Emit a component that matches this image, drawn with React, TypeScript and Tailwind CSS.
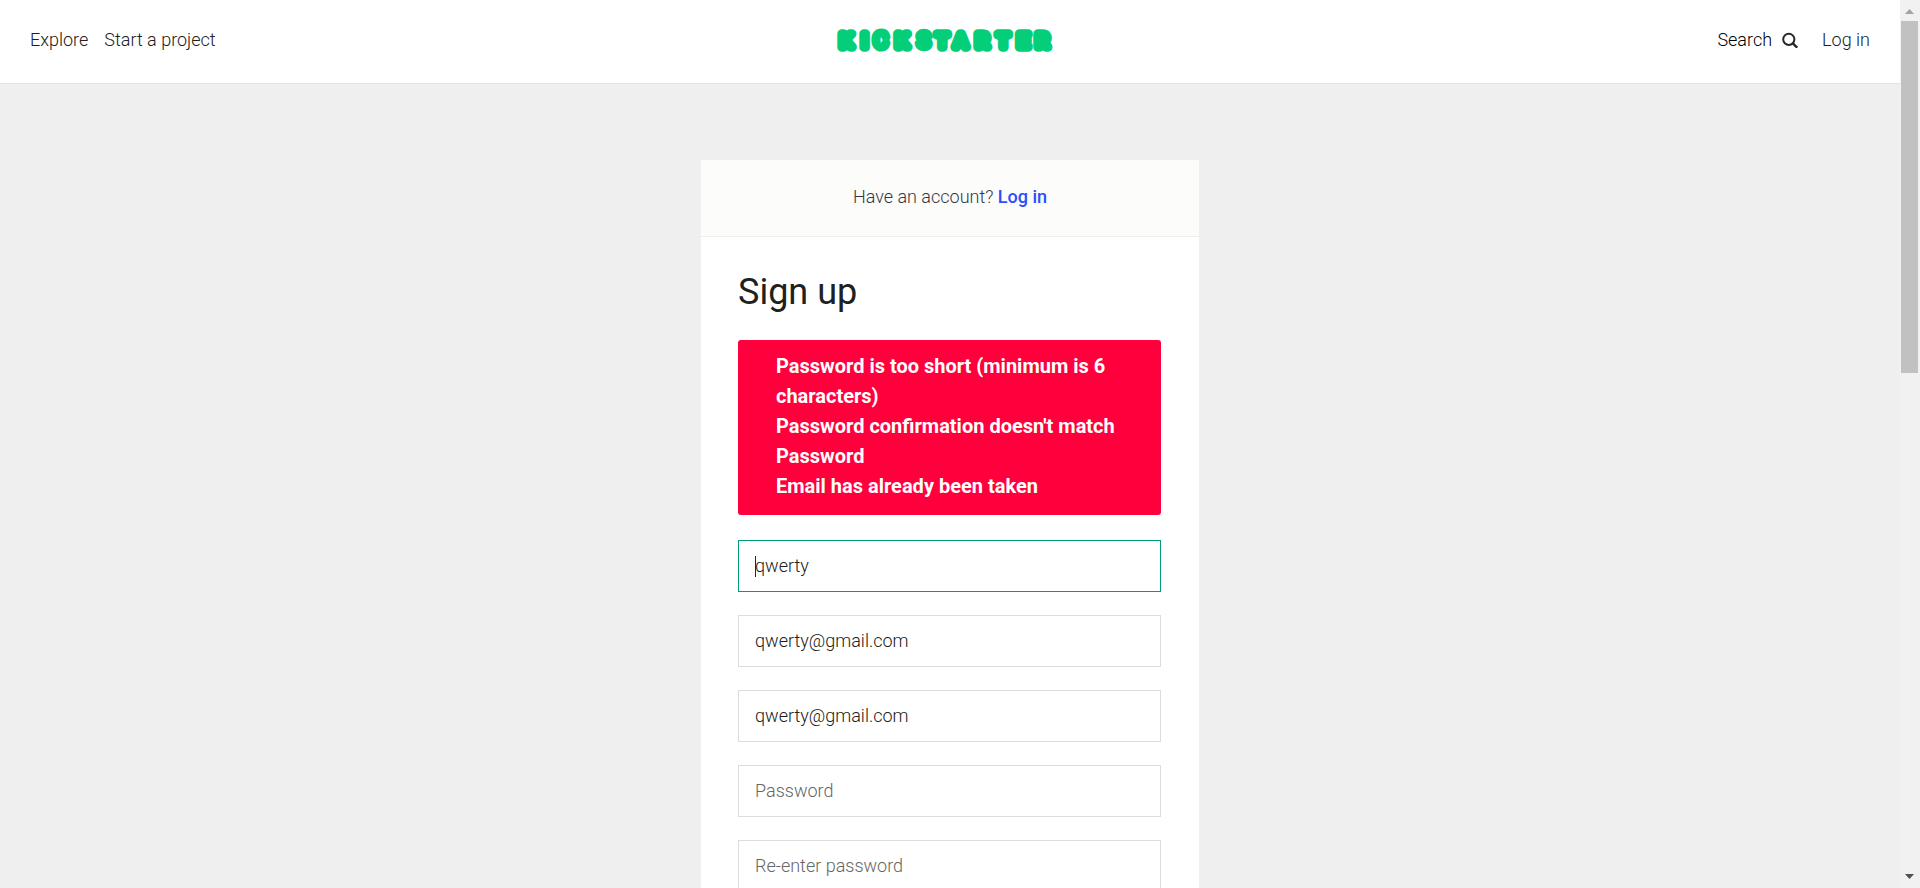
import React from 'react';

type Field = {
  id: string;
  label: string;
  type: string;
  value?: string;
  active?: boolean;
};

const fields: Field[] = [
  { id: 'name', label: 'Name', type: 'text', value: 'qwerty', active: true },
  { id: 'email', label: 'Email', type: 'email', value: 'qwerty@gmail.com' },
  { id: 'email-confirm', label: 'Re-enter email', type: 'email', value: 'qwerty@gmail.com' },
  { id: 'password', label: 'Password', type: 'password' },
  { id: 'password-confirm', label: 'Re-enter password', type: 'password' },
];

const errors = [
  'Password is too short (minimum is 6 characters)',
  "Password confirmation doesn't match Password",
  'Email has already been taken',
];

function Logo() {
  return (
    <svg width="218" height="26" viewBox="0 0 218 26" role="img" aria-label="Kickstarter">
      <text
        y="20"
        fill="#05ce78"
        stroke="#05ce78"
        strokeWidth="9.6"
        strokeLinejoin="round"
        strokeLinecap="round"
        className="font-['Roboto',sans-serif] text-[19px] font-light"
      >
        <tspan x="4.3 26">KI</tspan>
        <tspan x="37.6" y="21" strokeWidth="7" className="text-[22px] font-normal">
          C
        </tspan>
        <tspan x="60" y="20">
          K
        </tspan>
        <tspan x="81" y="21" strokeWidth="6.4" className="text-[22px] font-medium">
          S
        </tspan>
        <tspan x="100.6 118.7 140.3 161.6 181.8 200.3" y="20">
          TARTER
        </tspan>
      </text>
    </svg>
  );
}

function SearchIcon() {
  return (
    <svg width="16" height="16" viewBox="0 0 16 16" fill="none" stroke="#282828" strokeWidth="2" aria-hidden="true">
      <circle cx="6.8" cy="7.3" r="5.6" />
      <path d="M10.8 11.3 15.2 15.7" strokeWidth="2.4" />
    </svg>
  );
}

function Header() {
  return (
    <header className="grid h-[84px] shrink-0 grid-cols-3 items-center border-b border-[#e3e3e3] bg-white px-[30px] pb-1">
      <nav className="flex gap-4">
        <a href="#explore">Explore</a>
        <a href="#start">Start a project</a>
      </nav>
      <a href="#home" className="mr-[10px] justify-self-center">
        <Logo />
      </a>
      <div className="flex items-center justify-end gap-6">
        <button type="button" className="flex items-center gap-[10px] text-black">
          Search
          <SearchIcon />
        </button>
        <a href="#login">Log in</a>
      </div>
    </header>
  );
}

function TextField({ id, label, type, value, active }: Field) {
  return (
    <div className="relative">
      <input
        id={id}
        type={type}
        defaultValue={value}
        placeholder={label}
        aria-label={label}
        className={
          active
            ? 'block h-[52px] w-full border border-[#009e74] bg-white px-4 pb-0.5 outline-none placeholder:text-[#666666]'
            : 'block h-[52px] w-full border border-[#dcdedd] bg-white px-4 pb-0.5 outline-none placeholder:text-[#666666]'
        }
      />
      {active && <span className="absolute top-4 left-[17px] h-[21px] w-px bg-[#282828]" />}
    </div>
  );
}

function ScrollBar() {
  return (
    <div aria-hidden="true" className="flex w-5 shrink-0 flex-col items-center bg-[#f1f1f1]">
      <svg width="20" height="21" viewBox="0 0 20 21">
        <path d="M5 14 9.500 9 14 14Z" fill="#a3a3a3" />
      </svg>
      <div className="w-full flex-1 pr-0.5 pl-px">
        <div className="h-[352px] bg-[#c1c1c1]" />
      </div>
      <svg width="20" height="21" viewBox="0 0 20 21">
        <path d="M5 7 9.500 12 14 7Z" fill="#505050" />
      </svg>
    </div>
  );
}

export default function App() {
  return (
    <div className="flex h-screen overflow-hidden bg-[#efefef] font-['Roboto',sans-serif] text-[18px] leading-6 font-light text-[#202020]">
      <div className="flex min-w-0 flex-1 flex-col overflow-y-auto [scrollbar-width:none]">
        <Header />
        <main className="px-4 pt-[76px]">
          <section className="mx-auto max-w-[498px] rounded-xs bg-white">
            <p className="border-b border-[#efefea] bg-[#fcfcfa] pt-[25px] pb-[27px] text-center text-[#353545]">
              Have an account?{' '}
              <a href="#login" className="font-medium text-[#2a4dff]">
                Log in
              </a>
            </p>
            <form className="pt-8 pr-[38px] pb-10 pl-[37px]">
              <h1 className="text-[36px] leading-[46px] font-normal">Sign up</h1>
              <ul className="mt-[25px] rounded-[3px] bg-[#ff003c] pt-[11px] pr-[34px] pb-[14px] pl-[38px] text-[20px] leading-[30px] font-bold text-white">
                {errors.map((e) => (
                  <li key={e}>{e}</li>
                ))}
              </ul>
              <div className="mt-[25px] flex flex-col gap-[23px]">
                {fields.map((f) => (
                  <TextField key={f.id} {...f} />
                ))}
              </div>
            </form>
          </section>
        </main>
      </div>
      <ScrollBar />
    </div>
  );
}
